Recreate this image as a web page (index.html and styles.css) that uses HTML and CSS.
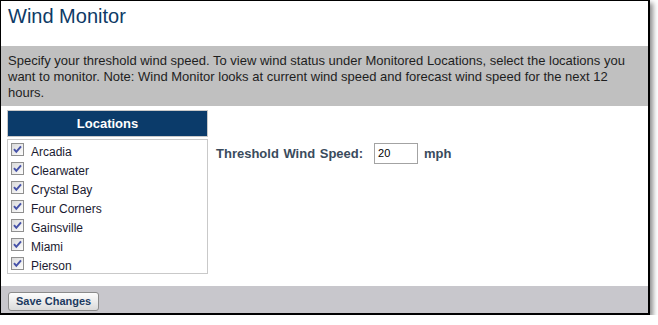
FILE: index.html
```html
<!DOCTYPE html>
<html>
<head>
<meta charset="utf-8">
<link rel="stylesheet" href="styles.css">
</head>
<body>
<svg class="defs" width="0" height="0" aria-hidden="true">
  <defs>
    <linearGradient id="cbfill" x1="0" y1="0" x2="1" y2="1">
      <stop offset="0" stop-color="#d8d8d8"/>
      <stop offset="1" stop-color="#ffffff"/>
    </linearGradient>
    <symbol id="cb" viewBox="0 0 13 13">
      <rect x="0.5" y="0.5" width="12" height="12" fill="url(#cbfill)" stroke="#8f8f8f"/>
      <polyline points="3,6.2 5.3,8.8 10,3.4" fill="none" stroke="#4652a8" stroke-width="2"/>
    </symbol>
  </defs>
</svg>
<div class="frame">
  <h1 class="title">Wind Monitor</h1>
  <div class="intro">Specify your threshold wind speed. To view wind status under Monitored Locations, select the locations you want to monitor. Note: Wind Monitor looks at current wind speed and forecast wind speed for the next 12 hours.</div>
  <div class="main">
    <div class="panel">
      <div class="panel-head">Locations</div>
      <ul class="loc-list">
        <li class="loc"><svg class="cb"><use href="#cb"/></svg><span class="loc-name">Arcadia</span></li>
        <li class="loc"><svg class="cb"><use href="#cb"/></svg><span class="loc-name">Clearwater</span></li>
        <li class="loc"><svg class="cb"><use href="#cb"/></svg><span class="loc-name">Crystal Bay</span></li>
        <li class="loc"><svg class="cb"><use href="#cb"/></svg><span class="loc-name">Four Corners</span></li>
        <li class="loc"><svg class="cb"><use href="#cb"/></svg><span class="loc-name">Gainsville</span></li>
        <li class="loc"><svg class="cb"><use href="#cb"/></svg><span class="loc-name">Miami</span></li>
        <li class="loc"><svg class="cb"><use href="#cb"/></svg><span class="loc-name">Pierson</span></li>
      </ul>
    </div>
    <div class="threshold">
      <span class="th-label">Threshold Wind Speed:</span>
      <span class="th-input">20</span>
      <span class="th-unit">mph</span>
    </div>
  </div>
  <div class="footer">
    <button class="save">Save Changes</button>
  </div>
</div>
</body>
</html>
```

FILE: styles.css
```css
html, body {
  margin: 0;
  padding: 0;
  background: #ffffff;
}
body {
  font-family: "Liberation Sans", Arial, sans-serif;
}
.defs {
  position: absolute;
  width: 0;
  height: 0;
}
.frame {
  box-sizing: border-box;
  width: 650px;
  height: 315px;
  border-style: solid;
  border-color: #000;
  border-width: 1px 2px 2px 1px;
  box-shadow: 3px 3px 5px rgba(0, 0, 0, 0.45);
  background: #fff;
  display: flex;
  flex-direction: column;
}
.title {
  margin: 4px 0 18px 7px;
  font-size: 20px;
  line-height: 23px;
  font-weight: normal;
  color: #0d3a66;
}
.intro {
  box-sizing: border-box;
  height: 60px;
  padding: 7px 8px 5px 7px;
  background: #c0c0c0;
  font-size: 13px;
  line-height: 16px;
  color: #1e1e1e;
}
.main {
  box-sizing: border-box;
  height: 180px;
  padding: 4px 0 0 6px;
  display: flex;
  align-items: flex-start;
}
.panel {
  width: 201px;
}
.panel-head {
  border: 1px solid #c9c9c9;
  background: #0b3b6a;
  color: #fff;
  font-size: 13px;
  font-weight: bold;
  text-align: center;
  line-height: 24px;
  padding-top: 1px;
  height: 24px;
}
.loc-list {
  list-style: none;
  margin: 2px 0 0 0;
  padding: 0 0 0 3px;
  border: 1px solid #c9c9c9;
  height: 133px;
}
.loc {
  display: flex;
  align-items: flex-start;
  height: 19px;
}
.cb {
  width: 13px;
  height: 13px;
  margin-top: 3px;
  flex: none;
}
.loc-name {
  margin-left: 7px;
  font-size: 12px;
  line-height: 14px;
  padding-top: 5px;
  color: #1a1a30;
}
.threshold {
  margin: 33px 0 0 8px;
  display: flex;
  align-items: center;
}
.th-label {
  font-size: 13px;
  font-weight: bold;
  word-spacing: 1px;
  color: #3a4b5c;
}
.th-input {
  box-sizing: border-box;
  width: 44px;
  height: 21px;
  margin-left: 11px;
  border: 1px solid #a3a3a3;
  font-size: 11px;
  line-height: 19px;
  padding-left: 3px;
  color: #000;
}
.th-unit {
  margin-left: 6px;
  font-size: 13px;
  font-weight: bold;
  color: #3a4b5c;
}
.footer {
  flex: 1;
  background: #c8c7cc;
  padding: 5px 7px 0 7px;
}
.save {
  box-sizing: border-box;
  height: 19px;
  padding: 0 7px;
  border: 1px solid #8b8b8b;
  border-radius: 3px;
  background: linear-gradient(#fdfdfd, #ececec 50%, #dadada);
  font-family: "Liberation Sans", Arial, sans-serif;
  font-size: 11px;
  font-weight: bold;
  color: #1c3a60;
  line-height: 16px;
}
```
